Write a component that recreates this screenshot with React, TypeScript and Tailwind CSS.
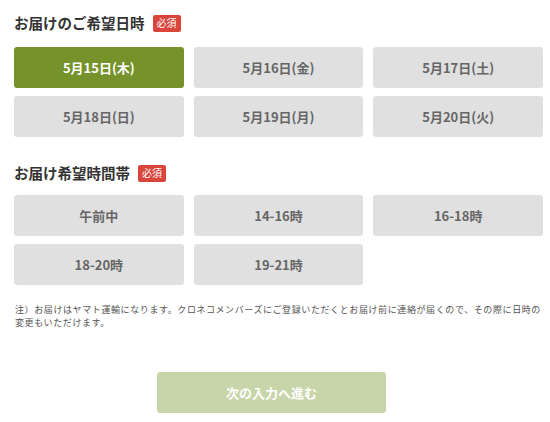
const font = { fontFamily: '"Noto Sans CJK JP", "Noto Sans", sans-serif' };

const dates = ["5月15日(木)", "5月16日(金)", "5月17日(土)", "5月18日(日)", "5月19日(月)", "5月20日(火)"];
const times = ["午前中", "14-16時", "16-18時", "18-20時", "19-21時"];

function Heading({ children }: { children: React.ReactNode }) {
  return (
    <div className="flex h-4 items-center gap-2">
      <h2 className="text-[14.5px] font-bold leading-none text-[#333]">{children}</h2>
      <span className="flex h-[17px] w-[28px] items-center justify-center rounded-[2px] bg-[#d9453b] text-[10px] leading-none text-white">
        必須
      </span>
    </div>
  );
}

function Choice({ label, active }: { label: string; active?: boolean }) {
  return (
    <button
      type="button"
      className={`h-[41px] rounded-[3px] text-[13px] font-bold ${
        active ? "bg-[#76922a] text-white" : "bg-[#e0e0e0] text-[#666]"
      }`}
    >
      {label}
    </button>
  );
}

export default function App() {
  return (
    <div className="h-[422px] w-[550px] bg-white pl-[14px] pr-[7px] pt-[15px]" style={font}>
      <Heading>お届けのご希望日時</Heading>
      <div className="mt-4 grid grid-cols-3 gap-x-[10px] gap-y-2">
        {dates.map((d, i) => (
          <Choice key={d} label={d} active={i === 0} />
        ))}
      </div>

      <div className="mt-7">
        <Heading>お届け希望時間帯</Heading>
      </div>
      <div className="mt-[14px] grid grid-cols-3 gap-x-[10px] gap-y-2">
        {times.map((t) => (
          <Choice key={t} label={t} />
        ))}
      </div>

      <p className="mt-[18px] pl-px text-[9px] leading-[13px] tracking-[0.6px] text-[#555]">
        注）お届けはヤマト運輸になります。クロネコメンバーズにご登録いただくとお届け前に連絡が届くので、その際に日時の変更もいただけます。
      </p>

      <div className="mt-[43px] flex justify-center pr-[14px]">
        <button
          type="button"
          className="h-[41px] w-[229px] rounded-[3px] bg-[#c8d5a9] text-[13px] font-bold text-white"
        >
          次の入力へ進む
        </button>
      </div>
    </div>
  );
}
